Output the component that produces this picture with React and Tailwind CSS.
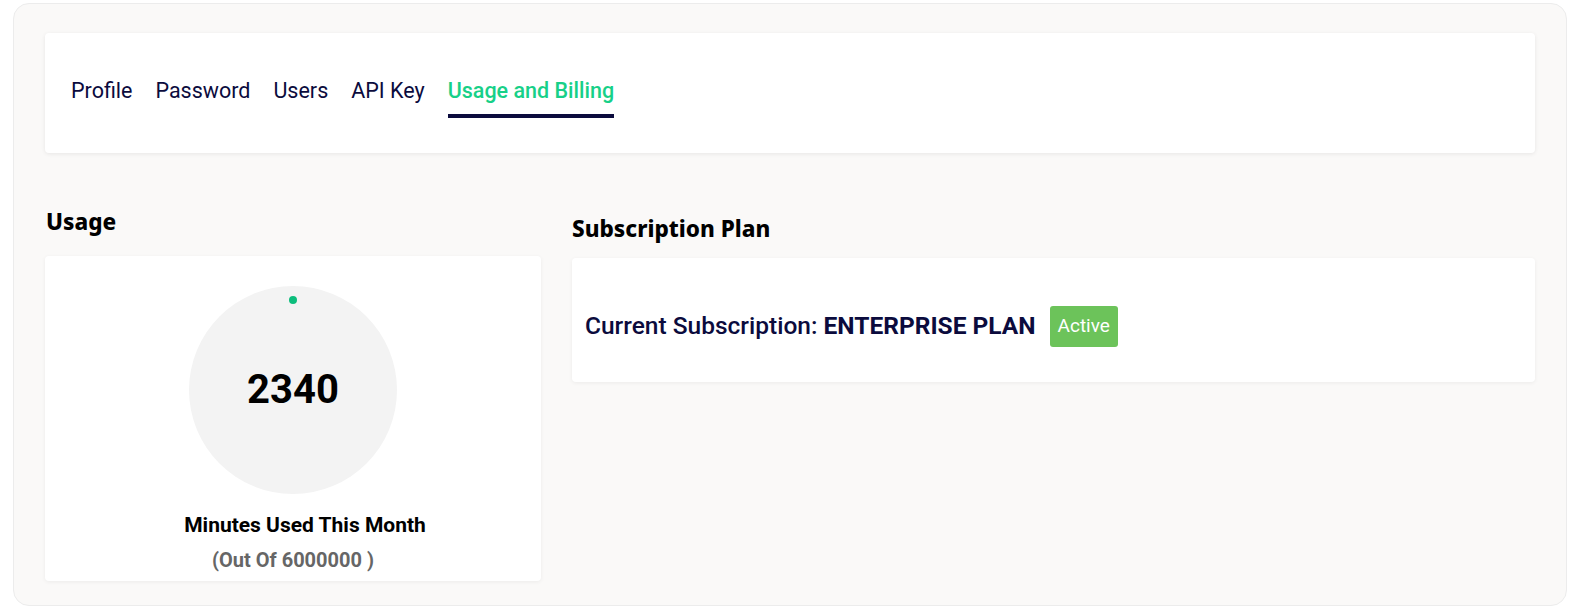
import React from 'react';

const tabs = ['Profile', 'Password', 'Users', 'API Key', 'Usage and Billing'];

const sans = { fontFamily: 'Roboto, "Noto Sans", sans-serif' };
const heading = { fontFamily: '"Noto Sans", sans-serif' };

const App = () => {
  const active = 'Usage and Billing';

  return (
    <div className="min-h-screen bg-white pt-[3px] pl-[13px] pr-[14px]" style={sans}>
      <div className="h-[603px] rounded-2xl border border-[#ececec] bg-[#faf9f8] px-[31px] pt-[29px]">
        {/* tab bar */}
        <div className="h-[120px] rounded bg-white pl-[26px] shadow-[0_1px_4px_rgba(0,0,0,0.08)]">
          <div className="flex gap-[23px] pt-[44px]">
            {tabs.map((tab) => (
              <div key={tab} className="flex flex-col">
                <span
                  className={`text-[21.5px] leading-[28px] ${
                    tab === active ? 'font-medium text-[#17d088]' : 'text-[#0b0b3d]'
                  }`}
                >
                  {tab}
                </span>
                {tab === active && <div className="mt-[9px] h-[4px] bg-[#0b0b3d]" />}
              </div>
            ))}
          </div>
        </div>

        <div className="mt-[55px] flex gap-[31px]">
          {/* usage */}
          <div className="w-[496px] shrink-0">
            <h2 className="pl-[1px] text-[22.5px] font-extrabold leading-[28px] text-black" style={heading}>
              Usage
            </h2>
            <div className="mt-[20px] h-[325px] rounded bg-white pt-[30px] shadow-[0_1px_4px_rgba(0,0,0,0.06)]">
              <div className="relative mx-auto flex h-[208px] w-[208px] items-center justify-center rounded-full bg-[#f3f3f3]">
                <span className="absolute left-1/2 top-[10px] h-[8px] w-[8px] -translate-x-1/2 rounded-full bg-[#0cbd7c]" />
                <span className="text-[40px] font-bold leading-none text-black">2340</span>
              </div>
              <p className="mt-[18px] pl-[24px] text-center text-[21px] font-bold leading-[26px] text-black">
                Minutes Used This Month
              </p>
              <p className="mt-[9px] text-center text-[20px] font-bold leading-[26px] text-[#666666]">
                (Out Of 6000000 )
              </p>
            </div>
          </div>

          {/* subscription */}
          <div className="flex-1 pt-[7px]">
            <h2 className="text-[22.5px] font-extrabold leading-[28px] text-black" style={heading}>
              Subscription Plan
            </h2>
            <div className="mt-[15px] flex h-[124px] items-center rounded bg-white pl-[13px] pt-[13px] shadow-[0_1px_4px_rgba(0,0,0,0.06)]">
              <span className="text-[24.5px] font-medium text-[#0b0b3d]">
                Current Subscription: <span className="font-bold">ENTERPRISE PLAN</span>
              </span>
              <span className="ml-[14px] flex h-[41px] items-center rounded-[3px] bg-[#6cc35a] px-[8px] text-[19px] text-white">
                Active
              </span>
            </div>
          </div>
        </div>
      </div>
    </div>
  );
};

export default App;
